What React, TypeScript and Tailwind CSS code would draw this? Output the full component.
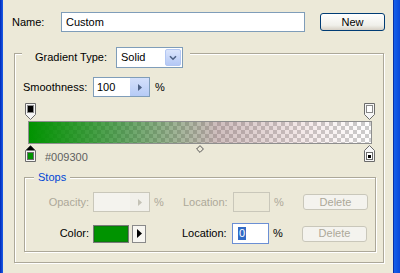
import React from 'react'

function TopStop({ fill }: { fill: string }) {
  return (
    <svg width="11" height="17" viewBox="0 0 11 17" className="block">
      <path d="M0.5 0.5H10.5V11.5L5.5 16.5L0.5 11.5Z" fill="#f6f6f6" stroke="#6b6b6b" />
      <rect x="2.5" y="2.5" width="6" height="7" fill={fill} stroke="#8a8a8a" />
    </svg>
  )
}

function BottomStop({ selected, color, dot }: { selected?: boolean; color: string; dot?: boolean }) {
  return (
    <svg width="11" height="17" viewBox="0 0 11 17" className="block">
      <path d="M5.5 0.5L10.5 5.5V16.5H0.5V5.5Z" fill="#f6f6f6" stroke="#6b6b6b" />
      {selected && <path d="M5.5 0.8L10.2 5.5H0.8Z" fill="#000" />}
      <rect x="2.5" y="7.5" width="6" height="7" fill={color} stroke="#6b6b6b" />
      {dot && <rect x="4" y="10" width="3" height="3" fill="#000" />}
    </svg>
  )
}

function ArrowButton({ disabled }: { disabled?: boolean }) {
  return (
    <div
      className={`flex h-full w-[19px] items-center justify-center ${
        disabled ? 'bg-[#f1f0ea]' : 'bg-[linear-gradient(to_bottom,#d4e0fb,#b6cbf6)]'
      }`}
    >
      <svg width="4" height="7" viewBox="0 0 4 7">
        <path d="M0 0L4 3.5L0 7Z" fill={disabled ? '#c4c2b6' : '#4d6185'} />
      </svg>
    </div>
  )
}

export default function App() {
  return (
    <div className="flex h-[273px] w-[400px] overflow-hidden bg-[#ece9d8] font-['Liberation_Sans',Arial,sans-serif] text-[11px] leading-[13px] text-black">
      {/* window frame left */}
      <div className="w-[3px] bg-[linear-gradient(to_right,#0029b8,#1c5ee9)]" />

      <div className="w-[390px] pt-[12px]">
        {/* Name row */}
        <div className="flex h-[20px] items-center">
          <span className="ml-[9px] w-[49px]">Name:</span>
          <div className="flex h-[20px] w-[244px] items-center border border-[#7f9db9] bg-white pl-[4px]">Custom</div>
          <button className="ml-[15px] h-[18px] w-[65px] rounded-[3px] border border-[#003c74] bg-[linear-gradient(to_bottom,#ffffff,#f0f0ea_70%,#d6d0c5)] text-[11px] leading-[13px]">
            New
          </button>
        </div>

        {/* Outer group */}
        <div className="ml-[11px] mt-[21px] h-[210px] w-[370px] border border-[#aca899] shadow-[inset_1px_1px_0_#fff,1px_1px_0_#fff]">
          <div className="-mt-[7px] ml-[7px] flex h-[21px] w-fit items-center bg-[#ece9d8] pl-[13px] pr-[7px]">
            <span className="w-[81px]">Gradient Type:</span>
            <div className="flex h-[21px] w-[67px] items-center border border-[#7f9db9] bg-white p-[1px]">
              <span className="flex-1 pl-[3px]">Solid</span>
              <div className="flex h-full w-[16px] items-center justify-center rounded-[2px] border border-[#b3c7f3] bg-[linear-gradient(to_bottom,#dbe5fc,#b4c8f5)]">
                <svg width="8" height="6" viewBox="0 0 8 6">
                  <path d="M1 1.2L4 4.2L7 1.2" fill="none" stroke="#4d6185" strokeWidth="1.6" />
                </svg>
              </div>
            </div>
          </div>

          {/* Smoothness */}
          <div className="mt-[9px] flex h-[20px] items-center pl-[8px]">
            <span className="w-[70px]">Smoothness:</span>
            <div className="flex h-[20px] w-[57px] items-center border border-[#7f9db9] bg-white">
              <span className="flex-1 pl-[3px]">100</span>
              <ArrowButton />
            </div>
            <span className="ml-[5px]">%</span>
          </div>

          {/* Gradient bar with stops */}
          <div className="mt-[6px]">
            <div className="ml-[10px] flex w-[350px] justify-between">
              <TopStop fill="#000" />
              <TopStop fill="#fff" />
            </div>
            <div className="relative ml-[13px] mt-[1px] h-[23px] w-[344px] border border-[#8f8f8f] bg-[conic-gradient(#cccccc_90deg,#ffffff_90deg_180deg,#cccccc_180deg_270deg,#ffffff_270deg)] bg-[length:8px_8px]">
              <div className="absolute inset-0 bg-[linear-gradient(to_right,rgba(0,147,0,1)_0%,rgba(40,130,40,0.72)_28%,rgba(140,100,100,0.42)_55%,rgba(190,130,130,0.18)_80%,rgba(220,170,170,0)_100%)]" />
            </div>
            <div className="relative ml-[10px] mt-[1px] flex h-[17px] w-[350px] items-start">
              <BottomStop selected color="#009300" />
              <span className="ml-[9px] mt-[6px] text-[#5f5f5f]">#009300</span>
              <div className="ml-auto">
                <BottomStop color="#fff" dot />
              </div>
              <svg width="8" height="8" viewBox="0 0 8 8" className="absolute left-[171px] top-[0px]">
                <path d="M4 0.6L7.4 4L4 7.4L0.6 4Z" fill="#ece9d8" stroke="#555" />
              </svg>
            </div>
          </div>

          {/* Stops group */}
          <div className="ml-[9px] mt-[15px] h-[75px] w-[352px] border border-[#aca899] shadow-[inset_1px_1px_0_#fff,1px_1px_0_#fff]">
            <div className="-mt-[8px] ml-[9px] w-fit bg-[#ece9d8] px-[4px] leading-[14px] text-[#0046d5]">Stops</div>

            <div className="mt-[8px] flex h-[20px] items-center text-[#aca899]">
              <span className="w-[64px] text-right">Opacity:</span>
              <div className="ml-[4px] flex h-[20px] w-[57px] border border-[#c9c7ba] bg-[#f4f3ee]">
                <div className="flex-1" />
                <ArrowButton disabled />
              </div>
              <span className="ml-[4px] w-[25px]">%</span>
              <span className="ml-[4px] w-[50px]">Location:</span>
              <div className="h-[20px] w-[37px] border border-[#c9c7ba] bg-[#ece9d8]" />
              <span className="ml-[4px] w-[29px]">%</span>
              <div className="flex h-[16px] w-[65px] items-center justify-center rounded-[3px] border border-[#c9c7ba] bg-[#f4f3ee]">
                Delete
              </div>
            </div>

            <div className="mt-[11px] flex h-[21px] items-center">
              <span className="w-[64px] text-right">Color:</span>
              <div className="ml-[4px] h-[18px] w-[36px] border border-[#7a7a7a] bg-[#009300] shadow-[inset_0_0_0_1px_#0a7d0a]" />
              <div className="ml-[3px] flex h-[18px] w-[14px] items-center justify-center border border-[#8a8a8a] bg-[#f7f6f1]">
                <svg width="5" height="9" viewBox="0 0 5 9">
                  <path d="M0 0L5 4.5L0 9Z" fill="#000" />
                </svg>
              </div>
              <span className="ml-[36px] w-[50px]">Location:</span>
              <div className="flex h-[21px] w-[37px] items-center border border-[#6b8fd4] bg-white pl-[5px]">
                <span className="bg-[#316ac5] px-[1px] text-white">0</span>
              </div>
              <span className="ml-[4px] w-[29px]">%</span>
              <div className="flex h-[16px] w-[65px] items-center justify-center rounded-[3px] border border-[#c9c7ba] bg-[#f4f3ee] text-[#aca899]">
                Delete
              </div>
            </div>
          </div>
        </div>
      </div>

      {/* window frame right */}
      <div className="w-[7px] border-l border-[#0831a8] bg-[linear-gradient(to_right,#1660ea,#0a48d8)]" />
    </div>
  )
}
